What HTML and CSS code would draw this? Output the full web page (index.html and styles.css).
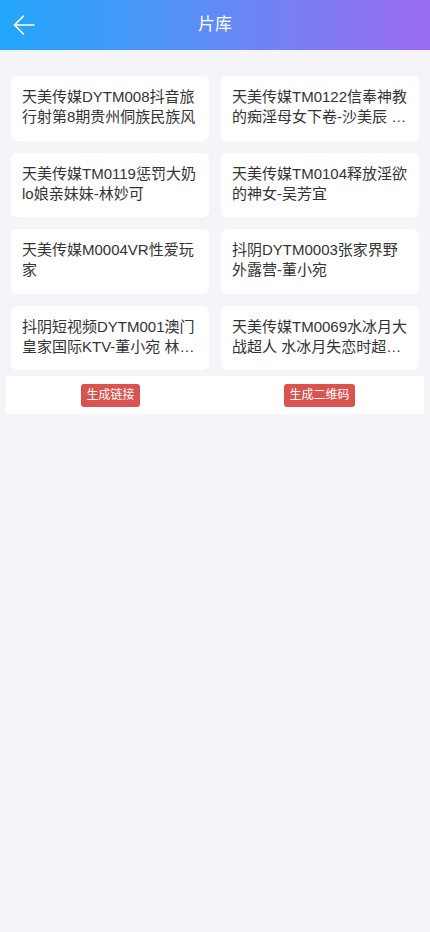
FILE: index.html
```html
<!DOCTYPE html>
<html lang="zh-CN">
<head>
<meta charset="utf-8">
<meta name="viewport" content="width=device-width, initial-scale=1">
<title>片库</title>
<link rel="stylesheet" href="styles.css">
</head>
<body>
<header class="topbar">
  <span class="back">
    <svg width="22" height="20" viewBox="0 0 22 20" fill="none" stroke="#fff" stroke-width="1.6" stroke-linecap="round" stroke-linejoin="round">
      <path d="M21 10H1.5"/>
      <path d="M10.5 1L1.5 10L10.5 19"/>
    </svg>
  </span>
  <h1 class="title">片库</h1>
</header>
<main class="content">
  <div class="grid">
    <div class="card"><p class="name">天美传媒DYTM008抖音旅行射第8期贵州侗族民族风</p></div>
    <div class="card"><p class="name">天美传媒TM0122信奉神教的痴淫母女下卷-沙美辰 林凤娇</p></div>
    <div class="card"><p class="name">天美传媒TM0119惩罚大奶lo娘亲妹妹-林妙可</p></div>
    <div class="card"><p class="name">天美传媒TM0104释放淫欲的神女-吴芳宜</p></div>
    <div class="card"><p class="name">天美传媒M0004VR性爱玩家</p></div>
    <div class="card"><p class="name">抖阴DYTM0003张家界野外露营-董小宛</p></div>
    <div class="card"><p class="name">抖阴短视频DYTM001澳门皇家国际KTV-董小宛 林凤娇</p></div>
    <div class="card"><p class="name">天美传媒TM0069水冰月大战超人 水冰月失恋时超人出现</p></div>
  </div>
  <div class="actions">
    <div class="cell"><button class="btn">生成链接</button></div>
    <div class="cell"><button class="btn">生成二维码</button></div>
  </div>
</main>
</body>
</html>
```
FILE: styles.css
```css
* { box-sizing: border-box; }
html, body {
  margin: 0;
  padding: 0;
  background: #f5f4f8;
  font-family: "Liberation Sans", "Noto Sans CJK SC", sans-serif;
}
.topbar {
  height: 50px;
  background: linear-gradient(90deg, #22a7fb 0%, #4b95f6 35%, #7a7df2 70%, #9b6cf0 100%);
  display: flex;
  align-items: center;
  justify-content: center;
  position: relative;
}
.back {
  position: absolute;
  left: 13px;
  top: 15px;
  width: 22px;
  height: 20px;
  display: flex;
}
.title {
  margin: 0;
  color: #fff;
  font-size: 17px;
  font-weight: normal;
  line-height: 20px;
}
.content {
  padding-top: 26px;
}
.grid {
  display: grid;
  grid-template-columns: 1fr 1fr;
  gap: 12px;
  padding: 0 11px;
}
.card {
  background: #fff;
  border-radius: 6px;
  padding: 11px 10px 13px 11px;
  height: 64.5px;
}
.name {
  margin: 0;
  font-size: 15px;
  line-height: 20px;
  color: #333;
  display: -webkit-box;
  -webkit-line-clamp: 2;
  -webkit-box-orient: vertical;
  overflow: hidden;
  word-break: break-all;
}
.actions {
  margin: 6px 6px 0;
  background: #fff;
  height: 38px;
  display: grid;
  grid-template-columns: 1fr 1fr;
}
.cell {
  display: flex;
  align-items: center;
  justify-content: center;
}
.btn {
  border: none;
  background: #d9534f;
  color: #fff;
  font-family: "Liberation Sans", "Noto Sans CJK SC", sans-serif;
  font-size: 12px;
  line-height: 17px;
  padding: 3px 5px;
  border-radius: 3px;
  height: 23px;
}
```
